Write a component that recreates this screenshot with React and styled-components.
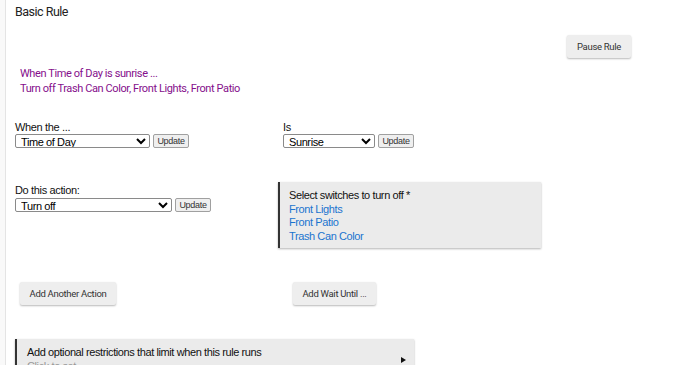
import React from "react";
import styled, { createGlobalStyle } from "styled-components";

const Global = createGlobalStyle`
  html, body { margin: 0; padding: 0; background: #f9f9f9; }
  body { font-family: "Liberation Sans", Arial, sans-serif; overflow: hidden; }
`;

const Page = styled.div`
  margin-left: 5px;
  min-height: 365px;
  background: #fff;
  border-left: 1px solid #e4e4e4;
  box-sizing: border-box;
`;

const Title = styled.div`
  font-family: Roboto, sans-serif;
  font-size: 12.5px;
  letter-spacing: -0.5px;
  line-height: 16px;
  color: #222;
  padding: 4px 0 0 9px;
`;

const PauseRow = styled.div`
  display: flex;
  justify-content: flex-end;
  padding-right: 59px;
  margin-top: 15px;
`;

const RaisedButton = styled.button`
  font-family: Roboto, sans-serif;
  font-size: 9.5px;
  letter-spacing: -0.3px;
  color: #333;
  background: #eeeeee;
  border: none;
  border-radius: 2px;
  height: 23px;
  width: ${(p) => p.$w}px;
  margin-left: ${(p) => p.$ml || 0}px;
  padding: 0;
  box-shadow: 0 1px 2px rgba(0, 0, 0, 0.28);
  cursor: pointer;
`;

const Summary = styled.div`
  margin-top: 8px;
  padding-left: 14px;
  font-family: Roboto, sans-serif;
  font-size: 11px;
  letter-spacing: -0.4px;
  line-height: 15px;
  color: #850f8c;
`;

const Grid = styled.div`
  display: grid;
  grid-template-columns: 263px 1fr;
  row-gap: 34px;
  margin-top: 23px;
  padding-left: 9px;
`;

const Field = styled.div`
  padding-left: ${(p) => p.$pl || 0}px;
`;

const WideField = styled(Field)`
  grid-column: 1 / 3;
`;

const Label = styled.div`
  font-size: 11px;
  letter-spacing: -0.35px;
  line-height: 14px;
  color: #111;
  margin-top: 1px;
`;

const Control = styled.div`
  display: flex;
  align-items: center;
  gap: 3px;
  margin-top: ${(p) => p.$mt || 0}px;
`;

const Select = styled.select`
  font-family: "Liberation Sans", Arial, sans-serif;
  font-size: 11px;
  letter-spacing: -0.4px;
  height: 14px;
  width: ${(p) => p.$w}px;
  padding: 0 1px;
  border: 1px solid #8a8a8a;
  border-radius: 2px;
  background: #fff;
  color: #000;
  box-sizing: border-box;
`;

const SmallButton = styled.button`
  font-family: "Liberation Sans", Arial, sans-serif;
  font-size: 9px;
  letter-spacing: -0.3px;
  height: 14px;
  width: 36px;
  padding: 0;
  border: 1px solid #a0a0a0;
  border-radius: 2px;
  background: #efefef;
  color: #333;
  box-sizing: border-box;
`;

const Panel = styled.div`
  background: #ebebeb;
  border-left: 2px solid #333;
  box-shadow: 0 1px 2px rgba(0, 0, 0, 0.3);
  box-sizing: border-box;
  width: ${(p) => p.$w}px;
  padding: ${(p) => p.$pad};
  font-size: 11px;
  letter-spacing: -0.4px;
  line-height: ${(p) => p.$lh || 13.6}px;
  color: #111;
`;

const LinkLine = styled.div`
  color: #1a74cf;
`;

const ButtonRow = styled.div`
  display: flex;
  align-items: center;
`;

const RestrictRow = styled.div`
  display: flex;
  align-items: center;
  justify-content: space-between;
`;

const Muted = styled.div`
  color: #999;
`;

const Arrow = styled.span`
  display: inline-block;
  width: 0;
  height: 0;
  border-top: 3.5px solid transparent;
  border-bottom: 3.5px solid transparent;
  border-left: 5px solid #111;
  margin-right: 8px;
`;

export default function App() {
  return (
    <>
      <Global />
      <Page>
        <Title>Basic Rule</Title>
        <PauseRow>
          <RaisedButton $w={64}>Pause Rule</RaisedButton>
        </PauseRow>
        <Summary>
          <div>When Time of Day is sunrise ...</div>
          <div>Turn off Trash Can Color, Front Lights, Front Patio</div>
        </Summary>
        <Grid>
          <Field>
            <Label>When the ...</Label>
            <Control>
              <Select $w={135} defaultValue="Time of Day">
                <option>Time of Day</option>
              </Select>
              <SmallButton>Update</SmallButton>
            </Control>
          </Field>
          <Field $pl={5}>
            <Label>Is</Label>
            <Control>
              <Select $w={92} defaultValue="Sunrise">
                <option>Sunrise</option>
              </Select>
              <SmallButton>Update</SmallButton>
            </Control>
          </Field>

          <Field>
            <Label>Do this action:</Label>
            <Control $mt={1}>
              <Select $w={157} defaultValue="Turn off">
                <option>Turn off</option>
              </Select>
              <SmallButton>Update</SmallButton>
            </Control>
          </Field>
          <Field>
            <Panel $w={263} $pad="7px 9px 5px 9px">
              <div>Select switches to turn off *</div>
              <LinkLine>Front Lights</LinkLine>
              <LinkLine>Front Patio</LinkLine>
              <LinkLine>Trash Can Color</LinkLine>
            </Panel>
          </Field>

          <ButtonRow>
            <RaisedButton $w={96} $ml={5}>Add Another Action</RaisedButton>
          </ButtonRow>
          <ButtonRow>
            <RaisedButton $w={83} $ml={15}>Add Wait Until ...</RaisedButton>
          </ButtonRow>

          <WideField>
            <Panel $w={399} $pad="7px 0 6px 10px" $lh={13.5}>
              <RestrictRow>
                <div>
                  <div>Add optional restrictions that limit when this rule runs</div>
                  <Muted>Click to set</Muted>
                </div>
                <Arrow />
              </RestrictRow>
            </Panel>
          </WideField>
        </Grid>
      </Page>
    </>
  );
}
